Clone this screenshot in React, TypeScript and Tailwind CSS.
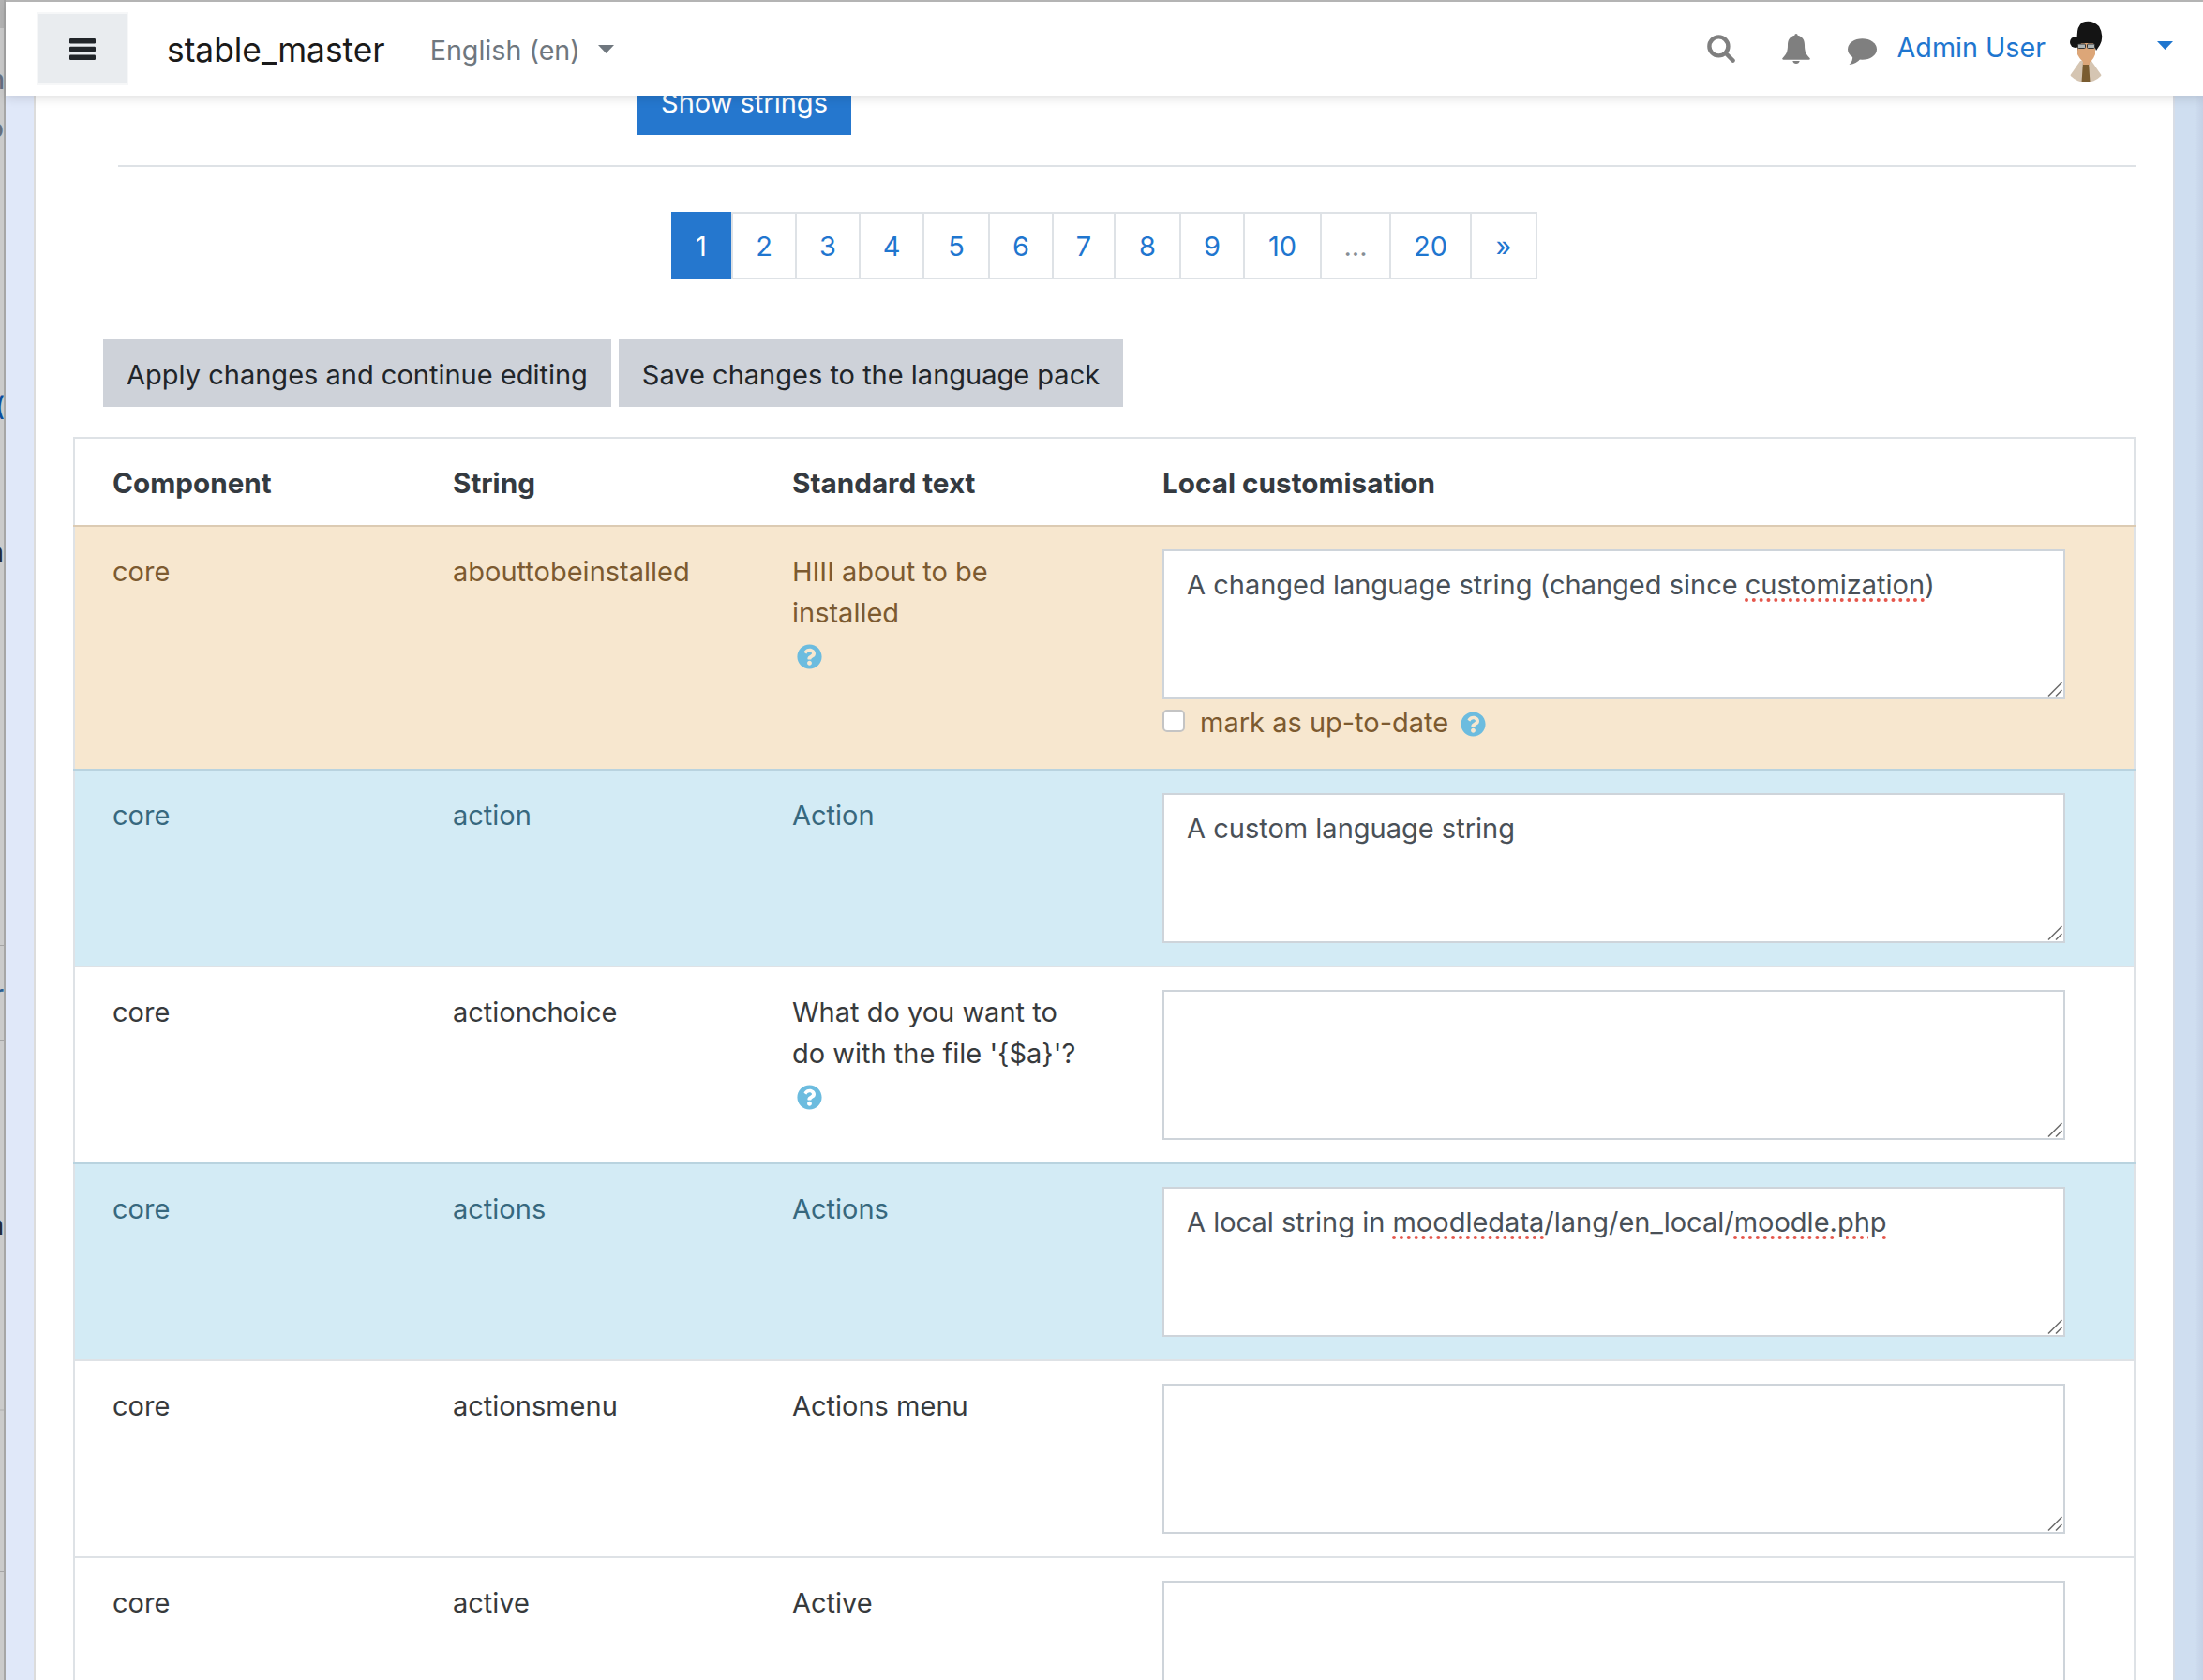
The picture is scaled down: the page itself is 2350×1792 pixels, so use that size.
import React from "react";
import { FaQuestionCircle } from "react-icons/fa";

const pages = [
  { t: "2", w: "w-[70px] border-l-2" },
  { t: "3", w: "w-[68px]" },
  { t: "4", w: "w-[68px]" },
  { t: "5", w: "w-[70px]" },
  { t: "6", w: "w-[68px]" },
  { t: "7", w: "w-[66px]" },
  { t: "8", w: "w-[70px]" },
  { t: "9", w: "w-[68px]" },
  { t: "10", w: "w-[82px]" },
  { t: "...", w: "w-[74px]", muted: true },
  { t: "20", w: "w-[86px]" },
  { t: "»", w: "w-[70px]" },
];

function Help({ className = "" }: { className?: string }) {
  return <FaQuestionCircle className={"text-[27px] text-[#6cbcdf] " + className} />;
}

type Part = { t: string; bad?: boolean };

function Field({ parts = [] }: { parts?: Part[] }) {
  const value = parts.map((p) => p.t).join("");
  return (
    <div className="relative h-[160px] w-[963px]">
      <textarea
        spellCheck={false}
        defaultValue={value}
        className="block h-[160px] w-[963px] resize-none border-2 border-[#ced4da] bg-white px-[24px] pb-[8px] pt-[14px] text-[#495057] outline-none"
      />
      {parts.length > 0 && (
        <div className="pointer-events-none absolute left-[26px] top-[16px] whitespace-pre text-transparent">
          {parts.map((p, i) =>
            p.bad ? (
              <span key={i} className="underline decoration-dotted decoration-[#e5574c] decoration-[3.5px] underline-offset-[4px]">
                {p.t}
              </span>
            ) : (
              <span key={i}>{p.t}</span>
            )
          )}
        </div>
      )}
      <svg className="pointer-events-none absolute bottom-[3px] right-[3px]" width="16" height="16" viewBox="0 0 16 16" fill="none" stroke="#6b6b6b" strokeWidth="1.5">
        <path d="M1 15.500 15.500 1M9 15.500 15.500 9" />
      </svg>
    </div>
  );
}

type Row = {
  s: string;
  std: string;
  help?: boolean;
  tone?: "warn" | "info";
  parts?: Part[];
  upToDate?: boolean;
};

const rows: Row[] = [
  {
    s: "abouttobeinstalled",
    std: "HIII about to be installed",
    help: true,
    tone: "warn",
    upToDate: true,
    parts: [{ t: "A changed language string (changed since " }, { t: "customization", bad: true }, { t: ")" }],
  },
  { s: "action", std: "Action", tone: "info", parts: [{ t: "A custom language string" }] },
  { s: "actionchoice", std: "What do you want to do with the file '{$a}'?", help: true },
  {
    s: "actions",
    std: "Actions",
    tone: "info",
    parts: [
      { t: "A local string in " },
      { t: "moodledata", bad: true },
      { t: "/lang/en_local/" },
      { t: "moodle.php", bad: true },
    ],
  },
  { s: "actionsmenu", std: "Actions menu" },
  { s: "active", std: "Active" },
];

const rowClass = {
  warn: "bg-[#f7e7cf] text-[#7c5a30] border-[#dccbb3]",
  info: "bg-[#d3ebf5] text-[#37687e] border-[#b9d3df]",
  none: "bg-white text-[#373a3c] border-[#dee2e6]",
};

function Header() {
  return (
    <header className="absolute left-[6px] right-0 top-0 z-10 flex h-[102px] items-center border-t-2 border-[#b4b4b4] bg-white shadow-[0_3px_10px_rgba(0,0,0,0.12)]">
      <button className="ml-[33px] flex h-[78px] w-[98px] items-center justify-center border-2 border-[#f6f7f8] bg-[#e9ecef]">
        <svg width="28" height="23" viewBox="0 0 28 23" fill="#212529">
          <rect width="28" height="5.5" y="0" rx="1.2" />
          <rect width="28" height="5.5" y="8.7" rx="1.2" />
          <rect width="28" height="5.5" y="17.5" rx="1.2" />
        </svg>
      </button>
      <span className="ml-[41px] mt-[3px] text-[35.3px] leading-[44px] text-[#1a1a1a]">stable_master</span>
      <span className="ml-[48px] mt-[3px] text-[28.7px] text-[#6f777e]">English (en)</span>
      <svg className="ml-[19px]" width="17" height="9" viewBox="0 0 17 9" fill="#6f777e">
        <path d="M0 0h17L8.5 9z" />
      </svg>
      <div className="flex-1" />
      <svg width="30" height="30" viewBox="0 0 30 30" fill="none" stroke="#7f7f7f" strokeWidth="4.4">
        <circle cx="12.4" cy="12.4" r="10" />
        <path d="M20 20l7.6 7.6" strokeLinecap="round" />
      </svg>
      <svg className="ml-[50px]" width="30" height="32" viewBox="0 0 30 32" fill="#7f7f7f">
        <path d="M15 0c1 0 1.6.7 1.6 1.8C22 3 24 7 24 12c0 7 1.5 10 5.5 14 .7.8.3 1.7-.8 1.7H1.3c-1.1 0-1.5-.9-.8-1.7C4.5 22 6 19 6 12c0-5 2-9 7.4-10.2C13.4.7 14 0 15 0z" />
        <path d="M11.3 29a3.8 3.8 0 0 0 7.4 0z" />
      </svg>
      <svg className="ml-[39px] mt-[6px]" width="32" height="28" viewBox="0 0 32 28" fill="#7f7f7f">
        <ellipse cx="16.5" cy="11.5" rx="15.5" ry="11.3" />
        <path d="M6 18q1 6-3.5 10Q11 27 15 21z" />
      </svg>
      <span className="mb-[3px] ml-[22px] text-[28.7px] text-[#1f76cf]">Admin User</span>
      <svg className="ml-[21px] mt-[6px] blur-[0.6px]" width="44" height="66" viewBox="0 0 44 66">
        <defs>
          <clipPath id="avatarBody">
            <circle cx="22" cy="44" r="22" />
          </clipPath>
        </defs>
        <g clipPath="url(#avatarBody)">
          <path d="M0 66 L16 43 L28 43 L44 66z" fill="#d5c5b2" />
          <path d="M19 44h6l1.5 22h-9z" fill="#7a5c30" />
        </g>
        <path d="M13 22h19v14q-3 8-9 10-6-2-10-10z" fill="#dca678" />
        <path d="M19 42h7v5h-7z" fill="#dca678" />
        <circle cx="11" cy="23" r="6" fill="#141414" />
        <path d="M14 28Q10 8 18 2 28-2 36 6 42 16 37 26L33 32 30 24H16L13 32z" fill="#141414" />
        <rect x="13.500" y="25" width="8" height="4.500" rx="1" fill="#aeb4b4" stroke="#333" strokeWidth="1" />
        <rect x="23.500" y="25" width="8" height="4.500" rx="1" fill="#aeb4b4" stroke="#333" strokeWidth="1" />
      </svg>
      <svg className="ml-[54px] mr-[32px] mt-[-8px]" width="17" height="9" viewBox="0 0 17 9" fill="#1f76cf">
        <path d="M0 0h17L8.500 9z" />
      </svg>
    </header>
  );
}

function LeftEdge() {
  return (
    <div className="relative w-[6px] shrink-0 overflow-hidden border-r-2 border-[#a6a6a6] bg-[#cbcbcb] text-[28px] font-medium leading-[30px]">
      <div className="h-[30px] bg-[#b4b4b4]" />
      <span className="absolute right-[-1px] top-[70px] text-[#667080]">n</span>
      <span className="absolute right-[0px] top-[122px] text-[#667080]">o</span>
      <span className="absolute right-[-1px] top-[418px] text-[#0b4fa0]">(</span>
      <span className="absolute right-[0px] top-[574px] text-[#222a3a]">a</span>
      <span className="absolute right-[0px] top-[1046px] text-[#2d5f93]">r</span>
      <span className="absolute right-[0px] top-[1292px] text-[#222a3a]">n</span>
      <i className="absolute left-0 right-0 top-[1008px] h-px bg-[#a5a5a5]" />
      <i className="absolute left-0 right-0 top-[1109px] h-px bg-[#a5a5a5]" />
      <i className="absolute left-0 right-0 top-[1335px] h-px bg-[#a5a5a5]" />
      <i className="absolute left-0 right-0 top-[1503px] h-[2px] bg-[#bdbdbd]" />
      <i className="absolute left-0 right-0 top-[1676px] h-px bg-[#a5a5a5]" />
    </div>
  );
}

export default function App() {
  return (
    <div className="relative flex h-[1792px] w-[2350px] overflow-hidden bg-white font-['Inter',sans-serif] text-[29px] leading-[44px] text-[#373a3c]">
      <Header />
      <LeftEdge />
      <div className="w-[30px] shrink-0 bg-[#e0e8f9]" />
      <main className="w-[2282px] shrink-0 border-l-2 border-[#dcdcdc] pl-[40px] pr-[41px] pt-[72px]">
        <button className="ml-[602px] block h-[72px] w-[228px] bg-[#2577ce] pt-[3px] text-white">Show strings</button>
        <hr className="ml-[48px] mr-[-1px] mt-[32px] h-[2px] border-0 bg-[#dee2e6]" />
        <nav className="ml-[638px] mt-[48px] flex h-[72px]">
          <span className="flex w-[64px] items-center justify-center bg-[#2577ce] pt-[2px] text-white">1</span>
          {pages.map((p) => (
            <span
              key={p.t}
              className={
                "flex items-center justify-center border-y-2 border-r-2 border-[#dee2e6] pt-[2px] " +
                p.w +
                (p.muted ? " text-[#868e96]" : " text-[#1f76cf]")
              }
            >
              {p.t}
            </span>
          ))}
        </nav>
        <div className="ml-[32px] mt-[64px] flex gap-[8px]">
          <button className="h-[72px] w-[542px] bg-[#ced2d9] pt-[3px] text-[#212529]">Apply changes and continue editing</button>
          <button className="h-[72px] w-[538px] bg-[#ced2d9] pt-[3px] text-[#212529]">Save changes to the language pack</button>
        </div>
        <table className="mt-[32px] w-[2200px] table-fixed border-collapse border-2 border-[#dee2e6]">
          <colgroup>
            <col className="w-[363px]" />
            <col className="w-[362px]" />
            <col className="w-[395px]" />
            <col />
          </colgroup>
          <thead>
            <tr className="h-[94px] text-left text-[29.7px] text-[#343a40]">
              <th className="pl-[40px] pt-[2px] font-bold">Component</th>
              <th className="pl-[41px] pt-[2px] font-bold">String</th>
              <th className="pl-[41px] pt-[2px] font-bold">Standard text</th>
              <th className="pl-[41px] pt-[2px] font-bold">Local customisation</th>
            </tr>
          </thead>
          <tbody>
            {rows.map((r) => (
              <tr key={r.s} className={"border-t-2 align-top " + rowClass[r.tone ?? "none"]}>
                <td className="pl-[40px] pt-[26px]">core</td>
                <td className="pl-[41px] pt-[26px]">{r.s}</td>
                <td className="pl-[41px] pr-[40px] pt-[26px]">
                  {r.std}
                  {r.help && <Help className="ml-[5px] mt-[11px]" />}
                </td>
                <td className="py-[24px] pl-[41px]">
                  <Field parts={r.parts} />
                  {r.upToDate && (
                    <label className="flex h-[50px] items-center">
                      <span className="mt-[-4px] h-[24px] w-[24px] rounded-[5px] border-2 border-[#c4c4c4] bg-white" />
                      <span className="ml-[16px]">mark as up-to-date</span>
                      <Help className="ml-[13px] mt-[2px]" />
                    </label>
                  )}
                </td>
              </tr>
            ))}
          </tbody>
        </table>
      </main>
      <div className="w-[32px] shrink-0 border-l-2 border-[#d8dde6] bg-gradient-to-r from-[#cfdef0] from-70% to-[#c4d1e6]" />
    </div>
  );
}
